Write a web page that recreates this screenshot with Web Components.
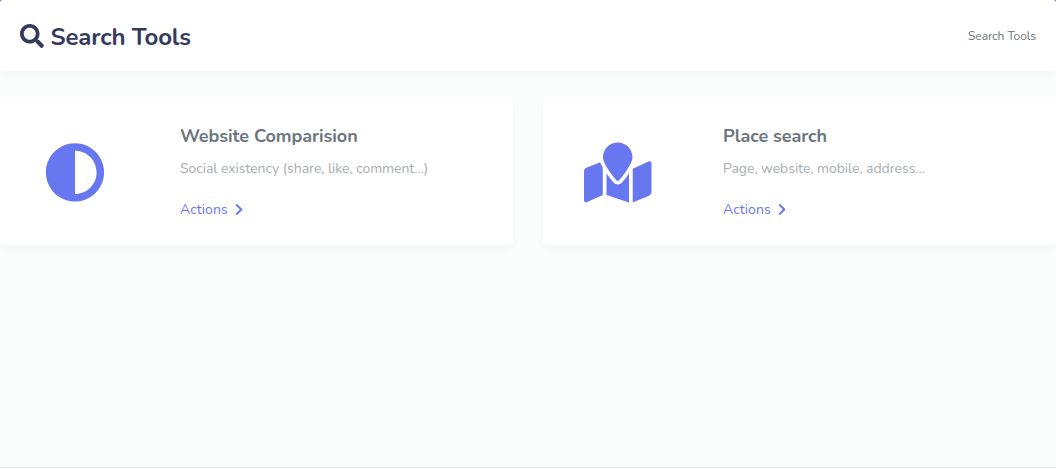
<!DOCTYPE html>
<html lang="en"><head><meta charset="utf-8"><title>Search Tools</title>
<style>
html,body{margin:0;height:100%;overflow:hidden}
body{font-family:Nunito,Lato,sans-serif;background:#fbfdfd;color:#6c757d}
</style></head><body>
<tools-page></tools-page>
<script>
const ICONS={
search:['0 0 512 512','M505 442.7L405.3 343c-4.5-4.5-10.6-7-17-7H372c27.6-35.3 44-79.7 44-128C416 93.1 322.9 0 208 0S0 93.1 0 208s93.1 208 208 208c48.3 0 92.7-16.4 128-44v16.3c0 6.4 2.5 12.5 7 17l99.7 99.7c9.4 9.4 24.6 9.4 33.9 0l28.3-28.3c9.4-9.4 9.4-24.6.1-34zM208 336c-70.7 0-128-57.2-128-128 0-70.7 57.2-128 128-128 70.7 0 128 57.2 128 128 0 70.7-57.2 128-128 128z'],
adjust:['0 0 512 512','M8 256c0 136.966 111.033 248 248 248s248-111.034 248-248S392.966 8 256 8 8 119.033 8 256zm248 184V72c101.705 0 184 82.311 184 184 0 101.705-82.311 184-184 184z'],
map:['0 0 576 512','M288 0c-69.59 0-126 56.41-126 126 0 56.26 82.35 158.8 113.9 196.02 6.39 7.54 17.82 7.54 24.2 0C331.65 284.8 414 182.26 414 126 414 56.41 357.59 0 288 0zM20.12 215.95A32.006 32.006 0 0 0 0 245.66v250.32c0 11.32 11.43 19.06 21.94 14.86L160 448V214.92c-8.84-15.98-16.07-31.54-21.25-46.42L20.12 215.95zM288 359.67c-14.07 0-27.38-6.18-36.51-16.96-19.66-23.2-40.57-49.62-59.49-76.72v182l192 64V266c-18.92 27.09-39.82 53.52-59.49 76.72-9.13 10.77-22.44 16.95-36.51 16.95zm266.06-198.51L416 224v288l139.88-55.95A31.996 31.996 0 0 0 576 426.34V176.02c0-11.32-11.43-19.06-21.94-14.86z'],
chevron:['0 0 320 512','M285.476 272.971L91.132 467.314c-9.373 9.373-24.569 9.373-33.941 0l-22.667-22.667c-9.357-9.357-9.375-24.522-.04-33.901L188.505 256 34.484 101.255c-9.335-9.379-9.317-24.544.04-33.901l22.667-22.667c9.373-9.373 24.569-9.373 33.941 0L285.475 239.03c9.373 9.372 9.373 24.568.001 33.941z']};
class Base extends HTMLElement{constructor(){super();this.attachShadow({mode:'open'})}
connectedCallback(){this.shadowRoot.innerHTML=this.render()}}
customElements.define('ui-icon',class extends Base{render(){const [v,d]=ICONS[this.getAttribute('name')];
return `<style>:host{display:block;flex:none}svg{display:block;height:100%;fill:currentColor;overflow:visible}</style><svg viewBox="${v}"><path d="${d}"/></svg>`}});
customElements.define('section-header',class extends Base{render(){return `<style>
:host{display:block;background:linear-gradient(#6777ef 0 10px,transparent 10px)}
header{display:flex;align-items:center;justify-content:space-between;height:71px;box-sizing:border-box;padding:0 20px;background:#fff;border-radius:3px;box-shadow:0 4px 8px rgba(0,0,0,.03)}
h1{display:flex;align-items:center;margin:3px 0 0;font-size:24px;line-height:28px;font-weight:700;color:#34395e;letter-spacing:-.17px}
ui-icon{height:24px;margin:-3px 6.5px 0 0}
span{font-size:12px;line-height:20px;letter-spacing:-.06px;margin-top:1px}
</style><header><h1><ui-icon name="search"></ui-icon><slot></slot></h1><span><slot name="crumb"></slot></span></header>`}});
customElements.define('tool-card',class extends Base{render(){return `<style>
:host{display:flex;height:144px;background:#fff;border-radius:3px;box-shadow:0 4px 8px rgba(0,0,0,.03)}
.pic{width:150px;display:flex;align-items:center;justify-content:center;color:#6777ef;box-sizing:border-box;padding-bottom:2px}
.pic ui-icon{height:60px;transform:translateY(.4px)}
.body{padding:24px 0 0 30px}
h4{margin:0;font-size:18px;line-height:22px;font-weight:700;letter-spacing:-.05px}
p{margin:10px 0 0;font-size:14px;line-height:24px;opacity:.6;letter-spacing:-.05px;white-space:nowrap}
a{display:flex;align-items:center;margin-top:17px;font-size:14px;line-height:24px;color:#6777ef;text-decoration:none;letter-spacing:.06px}
a ui-icon{height:13px;margin:-1px 0 0 7.5px}
</style><div class="pic"><ui-icon name="${this.getAttribute('icon')}"></ui-icon></div>
<div class="body"><h4><slot name="title"></slot></h4><p><slot></slot></p><a href="#">Actions<ui-icon name="chevron"></ui-icon></a></div>`}});
customElements.define('tools-page',class extends Base{render(){return `<style>
:host{display:flex;flex-direction:column;height:100%}
main{display:grid;grid-template-columns:1fr 1fr;gap:30px;margin-top:30px}
footer{margin-top:auto;height:1px;border-top:1px solid #e3eaef}
</style><section-header>Search Tools<span slot="crumb">Search Tools</span></section-header>
<main><tool-card icon="adjust"><span slot="title">Website Comparision</span>Social existency (share, like, comment...)</tool-card>
<tool-card icon="map"><span slot="title">Place search</span>Page, website, mobile, address...</tool-card></main><footer></footer>`}});
</script></body></html>
